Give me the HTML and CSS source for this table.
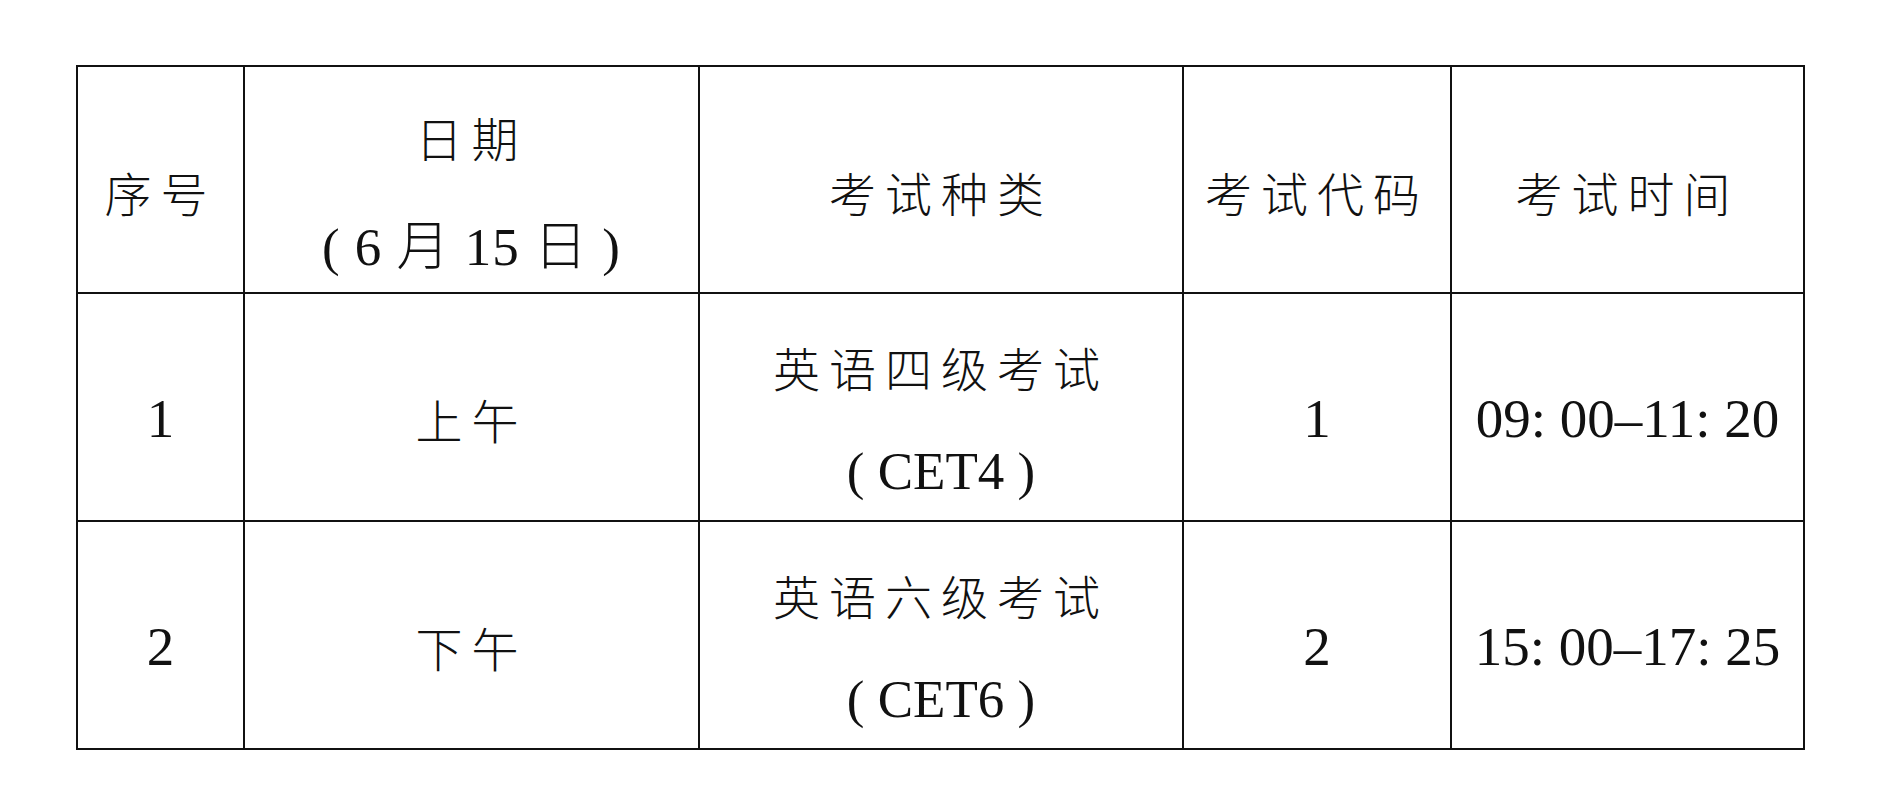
FILE: index.html
```html
<!DOCTYPE html>
<html lang="zh-CN">
<head>
<meta charset="utf-8">
<title>考试安排</title>
<link rel="stylesheet" href="styles.css">
</head>
<body>
<table class="schedule">
  <colgroup>
    <col class="c1"><col class="c2"><col class="c3"><col class="c4"><col class="c5">
  </colgroup>
  <tr class="head">
    <td><div class="cell">序号</div></td>
    <td><div class="cell two date"><span>日期</span><span class="latin date-line">( 6 月 15 日 )</span></div></td>
    <td><div class="cell">考试种类</div></td>
    <td><div class="cell">考试代码</div></td>
    <td><div class="cell">考试时间</div></td>
  </tr>
  <tr class="row">
    <td><div class="cell num">1</div></td>
    <td><div class="cell">上午</div></td>
    <td><div class="cell two"><span>英语四级考试</span><span class="latin">( CET4 )</span></div></td>
    <td><div class="cell num">1</div></td>
    <td><div class="cell time">09: 00–11: 20</div></td>
  </tr>
  <tr class="row">
    <td><div class="cell num">2</div></td>
    <td><div class="cell">下午</div></td>
    <td><div class="cell two"><span>英语六级考试</span><span class="latin">( CET6 )</span></div></td>
    <td><div class="cell num">2</div></td>
    <td><div class="cell time">15: 00–17: 25</div></td>
  </tr>
</table>
</body>
</html>
```

FILE: styles.css
```css
html, body {
  margin: 0;
  padding: 0;
  background: #ffffff;
}
body {
  padding: 65px 0 0 76px;
  font-family: "Liberation Serif", "Noto Sans CJK SC", serif;
  color: #111111;
}
.schedule {
  border-collapse: collapse;
  table-layout: fixed;
  width: 1727px;
}
.c1 { width: 167px; }
.c2 { width: 455px; }
.c3 { width: 484px; }
.c4 { width: 268px; }
.c5 { width: 353px; }
.schedule td {
  border: 2px solid #111111;
  padding: 0;
  text-align: center;
  vertical-align: middle;
}
.head { height: 227px; }
.row { height: 228px; }
.cell {
  display: flex;
  flex-direction: column;
  align-items: center;
  justify-content: center;
  padding-top: 24px;
  font-size: 47px;
  line-height: 60px;
  letter-spacing: 9px;
  font-family: "Noto Sans CJK SC", sans-serif;
  font-weight: 300;
}
.cell.two { gap: 44px; }
.cell.date { gap: 50px; }
.latin {
  font-family: "Liberation Serif", "Noto Sans CJK SC", serif;
  font-size: 53px;
  letter-spacing: 0;
}
.date-line {
  letter-spacing: 1px;
}
.num {
  font-family: "Liberation Serif", serif;
  font-size: 55px;
  letter-spacing: 0;
}
.time {
  font-family: "Liberation Serif", serif;
  font-size: 55px;
  letter-spacing: 0;
}
```
